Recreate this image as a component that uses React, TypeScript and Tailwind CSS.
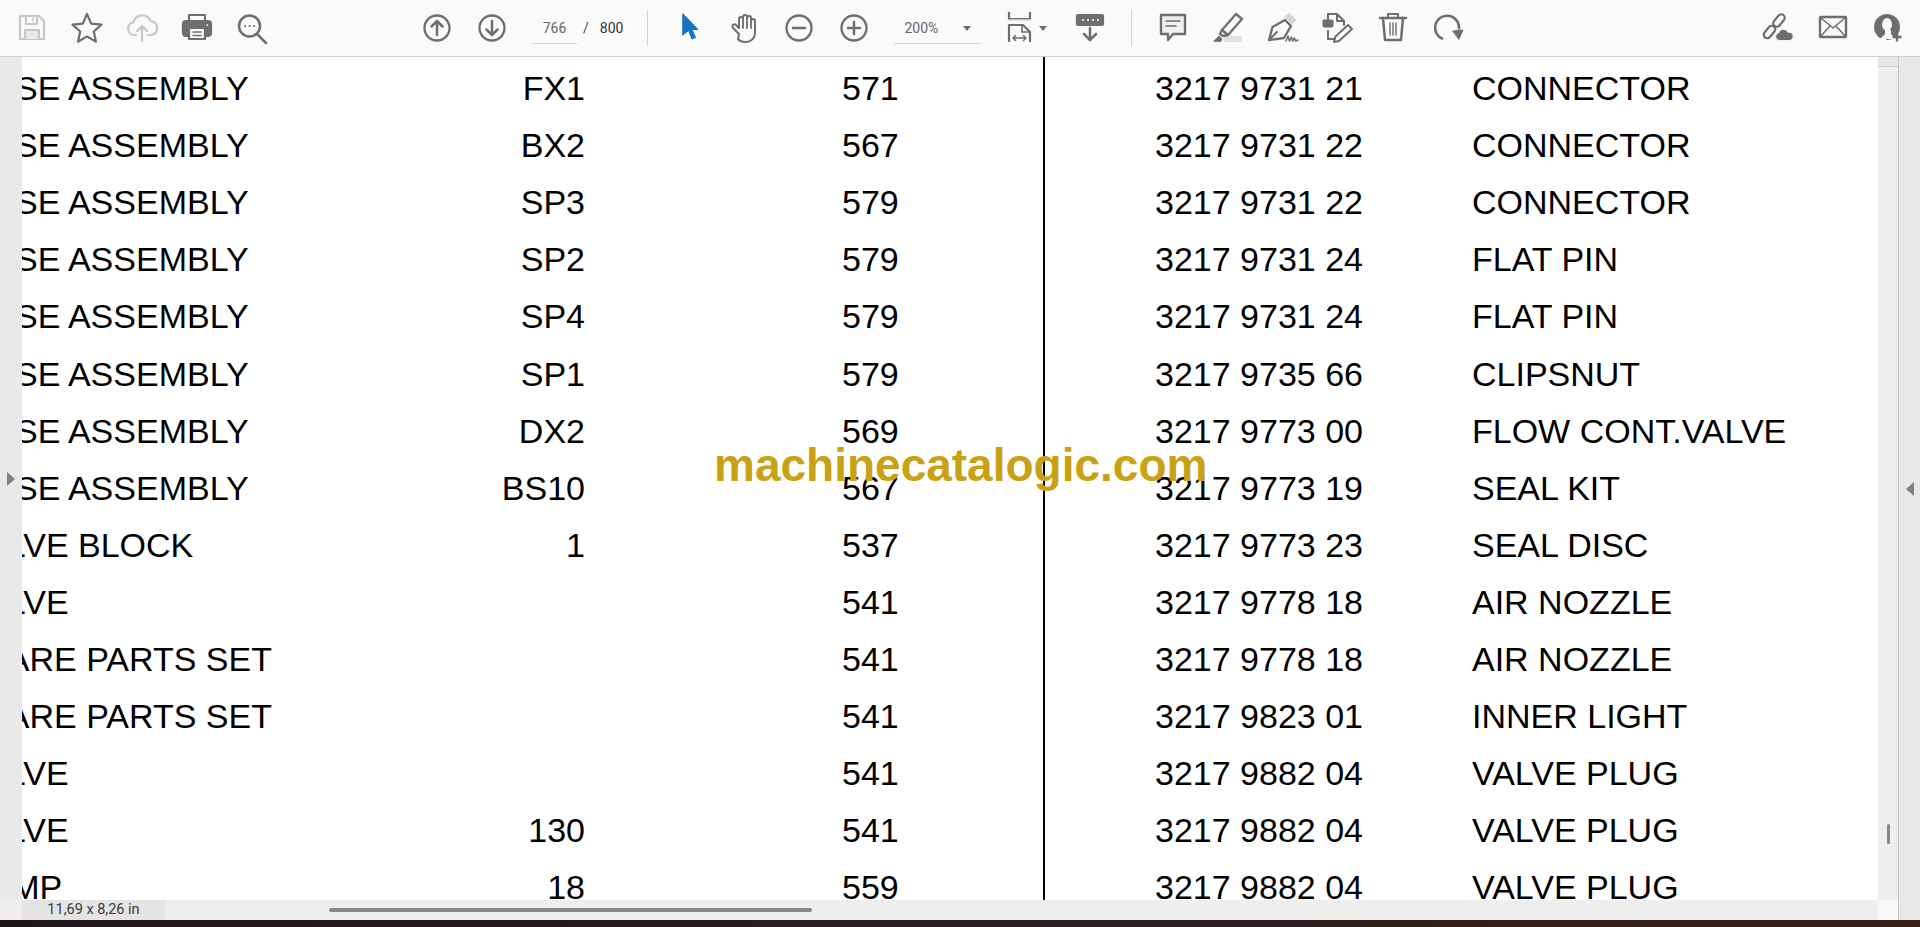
import type { ReactNode } from "react"

const G = "#6e6e6e"
const L = "#c6c6c6"

function Svg({ children }: { children: ReactNode }) {
  return (
    <svg width="34" height="34" viewBox="0 0 34 34" fill="none" stroke={G} strokeWidth="2.2" strokeLinejoin="round" strokeLinecap="round">
      {children}
    </svg>
  )
}

const SaveIcon = () => (
  <Svg>
    <g stroke={L}>
      <path d="M5 5h19l5 5v18H5z" />
      <path d="M11 5v8h11V5" />
      <path d="M18 7v3" strokeWidth="1.5" />
      <path d="M10 28v-9h14v9" fill="#e8e8e8" />
    </g>
  </Svg>
)
const StarIcon = () => (
  <Svg>
    <path d="M17 3l4.200 9.600 10.300 1-7.700 6.900 2.200 10.200-9-5.300-9 5.300 2.200-10.200-7.700-6.900 10.300-1z" />
  </Svg>
)
const UploadIcon = () => (
  <Svg>
    <g stroke={L}>
      <path d="M11 24H9.500a6.500 6.500 0 0 1-1-12.900A9 9 0 0 1 25.600 10 7 7 0 0 1 25 24h-2" />
      <path d="M17 30V15M12 20l5-5 5 5" />
    </g>
  </Svg>
)
const PrintIcon = () => (
  <Svg>
    <path d="M9 10V4h16v6" />
    <rect x="3" y="10" width="28" height="15" rx="3" fill={G} />
    <rect x="9" y="17" width="16" height="11" fill="#fafafa" />
    <path d="M13 21h8M13 24.500h8" strokeWidth="1.400" />
    <path d="M27 14h.5" stroke="#fafafa" strokeWidth="1.600" />
  </Svg>
)
const SearchIcon = () => (
  <Svg>
    <circle cx="14.500" cy="15" r="10.500" strokeWidth="2.500" />
    <path d="M22.500 23.500l8.500 8.500" strokeWidth="2.500" />
    <path d="M10 15h.1M14.500 15h.1M19 15h.1" strokeWidth="2" />
  </Svg>
)
const UpIcon = () => (
  <Svg>
    <circle cx="17" cy="17" r="12.500" strokeWidth="2.300" />
    <path d="M17 24V10M11.500 15.500L17 10l5.500 5.500" strokeWidth="2.500" />
  </Svg>
)
const DownIcon = () => (
  <Svg>
    <circle cx="17" cy="17" r="12.500" strokeWidth="2.300" />
    <path d="M17 10v14M11.500 18.500L17 24l5.500-5.500" strokeWidth="2.500" />
  </Svg>
)
const CursorIcon = () => (
  <Svg>
    <path d="M11 3l15 15.500h-6l3.500 8-3.500 1.500-3.500-8.500-5.500 4.500z" fill="#1473c6" stroke="#1473c6" strokeWidth="1" />
  </Svg>
)
const HandIcon = () => (
  <Svg>
    <g transform="translate(2 0)">
      <path d="M10 23l-6-6a2 2 0 0 1 3-3l3 3V8a2 2 0 0 1 4 0V6a2 2 0 0 1 4 0v1a2 2 0 0 1 4 0v3a2 2 0 0 1 4 0v12a9 9 0 0 1-9 9h-1.500a9 9 0 0 1-6.500-3z" strokeWidth="2" />
      <path d="M14 8v9M18 6v11M22 8v9" strokeWidth="1.800" />
    </g>
  </Svg>
)
const MinusIcon = () => (
  <Svg>
    <circle cx="17" cy="17" r="12.500" strokeWidth="2.300" />
    <path d="M11 17h12" strokeWidth="2.500" />
  </Svg>
)
const PlusIcon = () => (
  <Svg>
    <circle cx="17" cy="17" r="12.500" strokeWidth="2.300" />
    <path d="M11 17h12M17 11v12" strokeWidth="2.500" />
  </Svg>
)
const FitIcon = () => (
  <Svg>
    <path d="M7 1v7h21V1" strokeLinecap="butt" />
    <path d="M7 9h21" stroke="#dcdcdc" strokeWidth="1.500" />
    <path d="M7 31V14h14l7 7v10" strokeLinecap="butt" />
    <path d="M20 14v7h8" strokeWidth="1.600" />
    <path d="M11 27h13M13.500 24.500L11 27l2.500 2.500M21.500 24.500L24 27l-2.500 2.500" strokeWidth="1.500" />
  </Svg>
)
const ReadIcon = () => (
  <Svg>
    <rect x="4" y="4" width="26" height="10" rx="1" fill={G} />
    <path d="M10 9h.1M15 9h.1M20 9h.1M25 9h.1" stroke="#fafafa" strokeWidth="2" />
    <path d="M17 17v12M11 23l6 6 6-6" strokeWidth="2.500" />
  </Svg>
)
const CommentIcon = () => (
  <Svg>
    <path d="M5 4h24v19H17l-5 6v-6H5z" fill="#f0f0f0" strokeWidth="2.400" />
    <path d="M10 10h14M10 15h10" strokeWidth="1.500" />
  </Svg>
)
const HighlightIcon = () => (
  <Svg>
    <rect x="13" y="25" width="18" height="6" fill="#e0e0e0" stroke="none" />
    <path d="M25 3l6 5-14 16-6-5z" strokeWidth="2.300" />
    <path d="M11 19l-2 4 3 2 5-1" strokeWidth="2.300" />
    <path d="M3 30l5-5 3 3-1 2z" fill={G} strokeWidth="1" />
  </Svg>
)
const SignIcon = () => (
  <Svg>
    <path d="M20 6l3-3 6 6-3 3z" fill="#d4d4d4" stroke="#d4d4d4" />
    <path d="M3 29l3.500-13L19 9l6 6-7 12z" strokeWidth="2.300" />
    <path d="M3 29l8-8" strokeWidth="2" />
    <path d="M20 30l2-5 1.500 5 2-4 1 4 2-3 1 3 2.500-1" strokeWidth="1.500" />
  </Svg>
)
const EditIcon = () => (
  <Svg>
    <rect x="2" y="9" width="10" height="7" rx="1" fill={G} strokeWidth="1" />
    <path d="M7 9V3h9l7 7v4M16 3v7h7M7 20v8h7" strokeWidth="2" />
    <path d="M27 14l4 4-13 12-5 1 1-5z" strokeWidth="2" />
  </Svg>
)
const TrashIcon = () => (
  <Svg>
    <path d="M4 7h26" strokeWidth="2.500" />
    <path d="M12 7V3h10v4" strokeWidth="2" />
    <path d="M7 7l2 22h16l2-22" strokeWidth="2.500" />
    <path d="M14 12v12M17 12v12M20 12v12" strokeWidth="1.400" />
  </Svg>
)
const RotateIcon = () => (
  <Svg>
    <path d="M12 28A12 12 0 1 1 28 15.500v3" strokeWidth="2.500" strokeLinecap="butt" />
    <path d="M22 20l10-1-4 9z" fill={G} stroke={G} strokeWidth="1" />
  </Svg>
)
const LinkIcon = () => (
  <Svg>
    <rect x="-7" y="-3.500" width="14" height="7" rx="3.500" transform="translate(8.500 21) rotate(-50)" strokeWidth="2.200" />
    <rect x="-7" y="-3.500" width="14" height="7" rx="3.500" transform="translate(18 9.500) rotate(-50)" strokeWidth="2.200" />
    <path d="M18 29.500a3.800 3.800 0 0 1-.5-7.500 5 5 0 0 1 9.500-.7 4.200 4.200 0 0 1 2 8.200z" fill={G} stroke="#fafafa" strokeWidth="1" />
  </Svg>
)
const MailIcon = () => (
  <Svg>
    <rect x="4" y="6" width="26" height="20" rx="1" strokeWidth="2.400" />
    <path d="M5 7l12 10L29 7M5 25l9-10M29 25l-9-10" strokeWidth="1.500" />
  </Svg>
)
const UserIcon = () => (
  <Svg>
    <circle cx="16" cy="16" r="13" fill={G} stroke="none" />
    <ellipse cx="16" cy="13.500" rx="5" ry="6.500" fill="#fafafa" stroke="none" />
    <path d="M14 19v4l-5 5h16l-5-5v-4z" fill="#fafafa" stroke="none" />
    <path d="M7 28h8v2H7z" fill="#fafafa" stroke="none" />
    <path d="M26 21.500v9M21.500 26h9" strokeWidth="2.400" strokeLinecap="butt" />
  </Svg>
)

function Btn({ children }: { children: ReactNode }) {
  return <div className="w-[55px] h-[56px] flex items-center justify-center shrink-0">{children}</div>
}

function Caret() {
  return <div className="w-0 h-0 border-l-[4px] border-r-[4px] border-t-[5px] border-l-transparent border-r-transparent border-t-[#6e6e6e]" />
}

function Toolbar() {
  return (
    <div className="h-[57px] shrink-0 flex items-center pl-[4px] bg-[#fafafa] border-b border-[#d0d0d0] text-[#4a4a4a] font-['Roboto',sans-serif] text-[14px]">
      <Btn><SaveIcon /></Btn>
      <Btn><StarIcon /></Btn>
      <Btn><UploadIcon /></Btn>
      <Btn><PrintIcon /></Btn>
      <Btn><SearchIcon /></Btn>
      <div className="ml-[130px] flex">
        <Btn><UpIcon /></Btn>
        <Btn><DownIcon /></Btn>
      </div>
      <div className="ml-[13px] w-[45px] h-[30px] mt-[1px] border-b border-[#d4d4d4] flex items-center justify-center text-[#666]">766</div>
      <span className="ml-[6px]">/</span>
      <span className="ml-[11px] text-[#333]">800</span>
      <div className="ml-[24px] w-px h-[36px] bg-[#d4d4d4]" />
      <div className="ml-[13px] flex">
        <Btn><CursorIcon /></Btn>
        <Btn><HandIcon /></Btn>
        <Btn><MinusIcon /></Btn>
        <Btn><PlusIcon /></Btn>
      </div>
      <div className="ml-[13px] w-[87px] h-[30px] mt-[1px] pl-[10px] pr-[10px] border-b border-[#d4d4d4] flex items-center justify-between text-[#666]">
        200%
        <Caret />
      </div>
      <div className="ml-[21px] w-[34px] flex justify-center"><FitIcon /></div>
      <div className="ml-[3px]"><Caret /></div>
      <div className="ml-[26px] w-[34px]"><ReadIcon /></div>
      <div className="ml-[24px] w-px h-[36px] bg-[#d4d4d4]" />
      <div className="ml-[13px] flex">
        <Btn><CommentIcon /></Btn>
        <Btn><HighlightIcon /></Btn>
        <Btn><SignIcon /></Btn>
        <Btn><EditIcon /></Btn>
        <Btn><TrashIcon /></Btn>
        <Btn><RotateIcon /></Btn>
      </div>
      <div className="ml-[275px] flex">
        <Btn><LinkIcon /></Btn>
        <Btn><MailIcon /></Btn>
        <Btn><UserIcon /></Btn>
      </div>
    </div>
  )
}

const leftRows = [
  { name: "HOSE ASSEMBLY", ref: "FX1", page: "571" },
  { name: "HOSE ASSEMBLY", ref: "BX2", page: "567" },
  { name: "HOSE ASSEMBLY", ref: "SP3", page: "579" },
  { name: "HOSE ASSEMBLY", ref: "SP2", page: "579" },
  { name: "HOSE ASSEMBLY", ref: "SP4", page: "579" },
  { name: "HOSE ASSEMBLY", ref: "SP1", page: "579" },
  { name: "HOSE ASSEMBLY", ref: "DX2", page: "569" },
  { name: "HOSE ASSEMBLY", ref: "BS10", page: "567" },
  { name: "VALVE BLOCK", ref: "1", page: "537" },
  { name: "VALVE", ref: "", page: "541" },
  { name: "SPARE PARTS SET", ref: "", page: "541" },
  { name: "SPARE PARTS SET", ref: "", page: "541" },
  { name: "VALVE", ref: "", page: "541" },
  { name: "VALVE", ref: "130", page: "541" },
  { name: "PUMP", ref: "18", page: "559" },
]

const rightRows = [
  ["3217 9731 21", "CONNECTOR"],
  ["3217 9731 22", "CONNECTOR"],
  ["3217 9731 22", "CONNECTOR"],
  ["3217 9731 24", "FLAT PIN"],
  ["3217 9731 24", "FLAT PIN"],
  ["3217 9735 66", "CLIPSNUT"],
  ["3217 9773 00", "FLOW CONT.VALVE"],
  ["3217 9773 19", "SEAL KIT"],
  ["3217 9773 23", "SEAL DISC"],
  ["3217 9778 18", "AIR NOZZLE"],
  ["3217 9778 18", "AIR NOZZLE"],
  ["3217 9823 01", "INNER LIGHT"],
  ["3217 9882 04", "VALVE PLUG"],
  ["3217 9882 04", "VALVE PLUG"],
  ["3217 9882 04", "VALVE PLUG"],
]

function Page() {
  return (
    <div className="relative flex-1 min-w-0 flex overflow-hidden bg-white text-black text-[34px] font-['Liberation_Sans',Arial,sans-serif] whitespace-nowrap">
      {/* Left half of the page, scrolled past its left edge */}
      <div className="w-[1023px] shrink-0 pt-[3.2px] border-r-2 border-black">
        {leftRows.map((row, i) => (
          <div key={i} className="h-[57.07px] flex items-center">
            <div className="w-[563px] shrink-0 overflow-hidden">
              <div className="ml-[-58px]">{row.name}</div>
            </div>
            <div className="w-0 flex justify-end shrink-0">{row.ref}</div>
            <div className="ml-[257px]">{row.page}</div>
          </div>
        ))}
      </div>
      {/* Right half */}
      <div className="flex-1 pt-[3.2px]">
        {rightRows.map((row, i) => (
          <div key={i} className="h-[57.07px] flex items-center pl-[110px]">
            <div className="w-[317px] shrink-0">{row[0]}</div>
            <div>{row[1]}</div>
          </div>
        ))}
      </div>
      {/* Watermark stamped over the page */}
      <div className="absolute left-[692px] top-[380px] text-[46px] leading-[56px] font-bold text-[#c9a114]">machinecatalogic.com</div>
    </div>
  )
}

export default function App() {
  return (
    <div className="w-[1920px] h-[927px] flex flex-col overflow-hidden bg-[#eeeeee]">
      <Toolbar />
      <div className="flex-1 min-h-0 flex">
        <div className="flex-1 min-w-0 flex flex-col">
          <div className="flex-1 min-h-0 flex">
            <div className="w-[22px] shrink-0 bg-[#e9e9e9] flex items-center pl-[7px]">
              <div className="w-0 h-0 border-y-[7px] border-l-[8px] border-y-transparent border-l-[#808080]" />
            </div>
            <Page />
            <div className="w-[20px] shrink-0 bg-[#eeeeee] flex flex-col items-center">
              <div className="w-full h-[10px] bg-[#e6e6e6] border-b border-[#cfcfcf]" />
              <div className="mt-[757px] w-[3px] h-[20px] rounded-sm bg-[#888888]" />
            </div>
          </div>
          <div className="h-[20px] shrink-0 flex items-center bg-[#eeeeee]">
            <div className="ml-[22px] w-[143px] h-full bg-[#e4e4e4] flex items-center justify-center text-[14.5px] text-[#3a3a3a] font-['Roboto',sans-serif]">11,69 x 8,26 in</div>
            <div className="ml-[164px] w-[483px] h-[4px] rounded-sm bg-[#888888]" />
            <div className="ml-auto w-[20px] h-full bg-[#f8f8f8]" />
          </div>
        </div>
        <div className="w-[22px] shrink-0 bg-[#e8e8e8] border-l border-[#c4c4c4] flex items-center justify-center">
          <div className="w-0 h-0 border-y-[7px] border-r-[8px] border-y-transparent border-r-[#808080]" />
        </div>
      </div>
      <div className="h-[7px] shrink-0 bg-gradient-to-r from-[#1c1519] via-[#2a1e22] to-[#3a2019]" />
    </div>
  )
}
